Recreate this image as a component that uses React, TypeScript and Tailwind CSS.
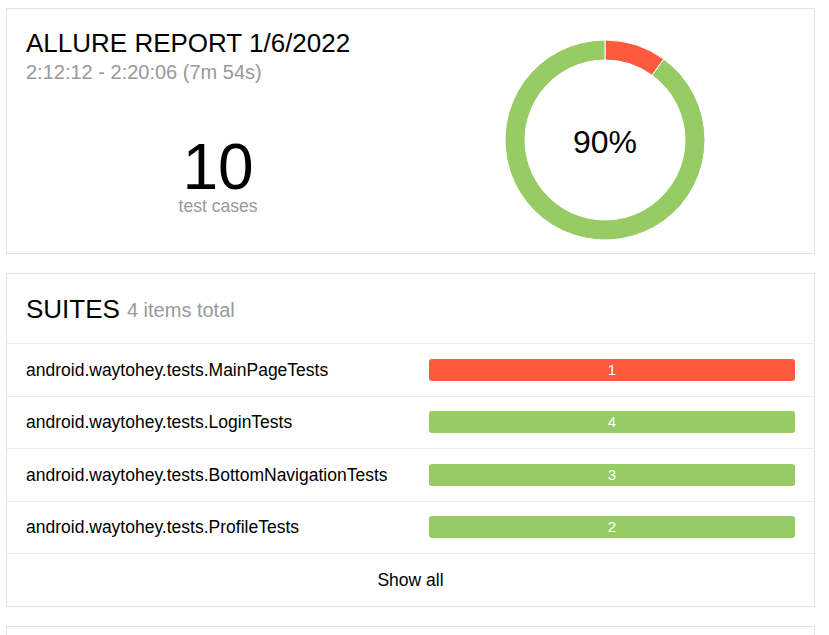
import React from "react";

const suites = [
  { name: "android.waytohey.tests.MainPageTests", count: 1, failed: true },
  { name: "android.waytohey.tests.LoginTests", count: 4, failed: false },
  { name: "android.waytohey.tests.BottomNavigationTests", count: 3, failed: false },
  { name: "android.waytohey.tests.ProfileTests", count: 2, failed: false },
];

function Donut() {
  return (
    <div className="relative h-[200px] w-[200px]">
      <svg width="200" height="200" viewBox="0 0 200 200" className="overflow-visible">
        <path
          d="M100 0 A100 100 0 0 1 158.78 19.1 L147.02 35.28 A80 80 0 0 0 100 20 Z"
          fill="#fd5a3e"
          stroke="#fff"
          strokeWidth="1"
        />
        <path
          d="M158.78 19.1 A100 100 0 1 1 100 0 L100 20 A80 80 0 1 0 147.02 35.28 Z"
          fill="#97cc64"
          stroke="#fff"
          strokeWidth="1"
        />
      </svg>
      <div className="absolute inset-0 flex items-center justify-center pt-[3px] text-[32px] text-black">90%</div>
    </div>
  );
}

export default function App() {
  return (
    <div className="h-[635px] overflow-hidden bg-white pl-[6px] pr-[14px] pt-[8px] font-['Liberation_Sans',Arial,sans-serif] text-black">
      {/* summary */}
      <div className="flex h-[246px] border border-[#e3e3e3] px-[19px]">
        <div className="flex w-[384px] flex-col">
          <div className="pt-[19px] text-[26px] leading-[30px]">ALLURE REPORT 1/6/2022</div>
          <div className="mt-[2px] text-[20px] leading-[24px] text-[#999]">2:12:12 - 2:20:06 (7m 54s)</div>
          <div className="mt-[54px] text-center text-[64px] leading-[58px]">10</div>
          <div className="text-center text-[17.5px] leading-[20px] text-[#999]">test cases</div>
        </div>
        <div className="flex flex-1 justify-center pl-[5px] pt-[31px]">
          <Donut />
        </div>
      </div>

      {/* suites */}
      <div className="mt-[19px] border border-[#e3e3e3]">
        <div className="flex h-[69px] items-center px-[19px]">
          <span className="text-[26px] leading-[30px]">SUITES </span>
          <span className="ml-[7px] mt-[3px] text-[20px] leading-[24px] text-[#999]">4 items total</span>
        </div>
        {suites.map((s) => (
          <div key={s.name} className="flex h-[52.5px] items-center border-t border-[#ebebeb] px-[19px]">
            <div className="w-[403px] text-[17.5px]">{s.name}</div>
            <div
              className={`flex h-[22px] flex-1 items-center justify-center rounded-[3px] text-[15px] text-white ${
                s.failed ? "bg-[#fd5a3e]" : "bg-[#97cc64]"
              }`}
            >
              {s.count}
            </div>
          </div>
        ))}
        <div className="flex h-[52.5px] items-center justify-center border-t border-[#ebebeb] text-[17.5px]">Show all</div>
      </div>

      <div className="mt-[19px] h-[100px] border border-[#e3e3e3]" />
    </div>
  );
}
